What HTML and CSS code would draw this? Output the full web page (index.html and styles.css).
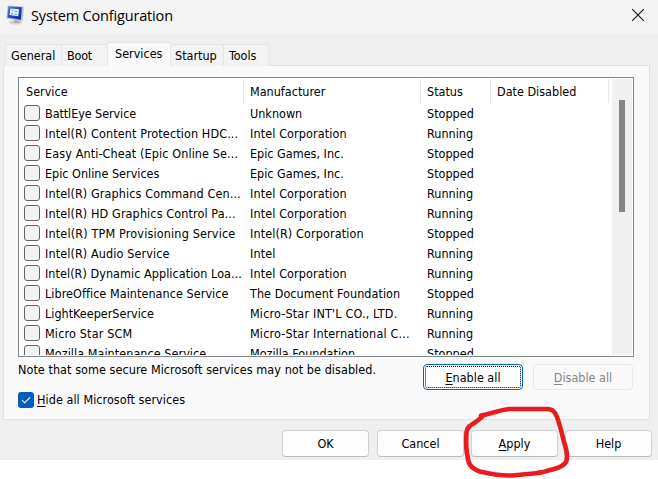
FILE: index.html
```
<!DOCTYPE html>
<html lang="en">
<head>
<meta charset="utf-8">
<title>System Configuration</title>
<link rel="stylesheet" href="styles.css">
</head>
<body>
<div class="window">
  <header class="titlebar">
    <svg class="app-icon" width="20" height="20" viewBox="0 0 20 20">
      <defs>
        <linearGradient id="screen" x1="0" y1="0" x2="1" y2="1"><stop offset="0" stop-color="#5585dc"/><stop offset=".5" stop-color="#2448bd"/><stop offset="1" stop-color="#1020a0"/></linearGradient>
      </defs>
      <ellipse cx="9.500" cy="17.500" rx="6.500" ry="2.200" fill="#d2d4d5"/>
      <path d="M8.500 13l5.500 1-1 4H7.500z" fill="#a9adb0"/>
      <path d="M1.500 .5L18 1.500 16.500 16.500 .5 13.500z" fill="#bfc5cc"/>
      <path d="M2.300 1.200L16 2.200 14.800 14.800 1.500 12.500z" fill="url(#screen)"/>
      <path d="M4.300 3.500L13 4.200 12.200 11.200 3.500 10z" fill="#e9f3fb"/>
      <path d="M5.500 5l1 .8 1-1.300M5 8.300l1 .8 1-1.300M8.500 6.200l3 .3M8.300 9l2.700.4" fill="none" stroke="#4a8ac6" stroke-width=".9"/>
    </svg>
    <h1 class="title">System Configuration</h1>
    <svg class="close" width="14" height="14" viewBox="0 0 14 14"><path d="M1.200 1.200L12.800 12.800M12.800 1.200L1.200 12.800" stroke="#1b1b1b" stroke-width="1.200"/></svg>
  </header>
  <nav class="tabs">
    <span class="tab general">General</span><span class="tab boot">Boot</span><span class="tab active">Services</span><span class="tab startup">Startup</span><span class="tab tools">Tools</span>
  </nav>
  <main class="panel">
    <section class="list">
      <div class="table">
        <div class="row head"><span>Service</span><span>Manufacturer</span><span>Status</span><span>Date Disabled</span></div>
        <div class="row"><i class="box"></i><span class="tight">BattlEye Service</span><span>Unknown</span><span>Stopped</span></div>
        <div class="row"><i class="box"></i><span class="wide">Intel(R) Content Protection HDC...</span><span class="wide">Intel Corporation</span><span>Running</span></div>
        <div class="row"><i class="box"></i><span class="wide">Easy Anti-Cheat (Epic Online Se...</span><span>Epic Games, Inc.</span><span>Stopped</span></div>
        <div class="row"><i class="box"></i><span>Epic Online Services</span><span>Epic Games, Inc.</span><span>Stopped</span></div>
        <div class="row"><i class="box"></i><span class="wide">Intel(R) Graphics Command Cen...</span><span class="wide">Intel Corporation</span><span>Running</span></div>
        <div class="row"><i class="box"></i><span class="wide">Intel(R) HD Graphics Control Pa...</span><span class="wide">Intel Corporation</span><span>Running</span></div>
        <div class="row"><i class="box"></i><span class="wider">Intel(R) TPM Provisioning Service</span><span class="wide">Intel(R) Corporation</span><span>Stopped</span></div>
        <div class="row"><i class="box"></i><span class="wide">Intel(R) Audio Service</span><span class="wide">Intel</span><span>Running</span></div>
        <div class="row"><i class="box"></i><span class="slight">Intel(R) Dynamic Application Loa...</span><span class="wide">Intel Corporation</span><span>Running</span></div>
        <div class="row"><i class="box"></i><span class="slight">LibreOffice Maintenance Service</span><span class="slight">The Document Foundation</span><span>Stopped</span></div>
        <div class="row"><i class="box"></i><span>LightKeeperService</span><span class="wider">Micro-Star INT'L CO., LTD.</span><span>Running</span></div>
        <div class="row"><i class="box"></i><span class="wider">Micro Star SCM</span><span class="wider">Micro-Star International C...</span><span>Running</span></div>
        <div class="row"><i class="box"></i><span class="slight">Mozilla Maintenance Service</span><span>Mozilla Foundation</span><span>Stopped</span></div>
      </div>
      <div class="scrollbar"><div class="thumb"></div></div>
    </section>
    <div class="below">
      <div class="notes">
        <p class="note">Note that some secure Microsoft services may not be disabled.</p>
        <label class="hide"><svg class="check" width="16" height="16" viewBox="0 0 16 16"><rect width="16" height="16" rx="3" fill="#005fb8"/><path d="M4 8.200l2.700 2.600L12 5.400" fill="none" stroke="#fff" stroke-width="1.100"/></svg><span><u>H</u>ide all Microsoft services</span></label>
      </div>
      <button class="btn focused"><span><u>E</u>nable all</span></button>
      <button class="btn disabled"><span><u>D</u>isable all</span></button>
    </div>
  </main>
  <footer class="actions">
    <button class="btn">OK</button>
    <button class="btn">Cancel</button>
    <button class="btn apply"><span><u>A</u>pply</span></button>
    <button class="btn help">Help</button>
  </footer>
</div>
<svg class="marker" width="120" height="79" viewBox="460 400 120 79"><path d="M481 415.500C490 414 500 410 509 409L547 409C553 409 555 412 557 417C560 425 562 434 564 442C567 450 567.500 456 566.500 461C564 467 555 469 543 472C534 474 525 474 512 475.500C500 476 490 474 480 471.500C470 468 468 463 467.500 456C465.500 448 466 440 466.500 432C467 427 471 425 475 422.500L482 417" fill="none" stroke="#e81c1e" stroke-width="4.600" stroke-linecap="round" stroke-linejoin="round"/></svg>
</body>
</html>
```
FILE: styles.css
```
* { box-sizing: border-box; }
body {
  margin: 0;
  position: relative;
  height: 479px;
  overflow: hidden;
  background: #fff;
  color: #000;
  font: 12.5px/20px "DejaVu Sans Condensed", "DejaVu Sans", sans-serif;
  font-stretch: condensed;
}
.window { height: 460px; background: #efefef; }
.titlebar {
  display: flex;
  align-items: flex-start;
  height: 34px;
  padding: 5px 13px 0 6px;
  background: #f3f3f3;
}
.title {
  margin: 0 auto 0 5px;
  font: 14.5px/22px "Open Sans", sans-serif;
  letter-spacing: -0.16px;
}
.close { margin-top: 3px; }
.tabs { display: flex; align-items: flex-end; height: 32px; padding-left: 5px; }
.tab {
  height: 22px;
  padding-left: 6px;
  border: 1px solid #e5e5e5;
  border-width: 1px 0 0 1px;
  background: #f3f3f3;
  line-height: 21px;
}
.general { width: 56px; padding-left: 5px; }
.boot { width: 46px; padding-left: 5px; letter-spacing: -0.2px; }
.active { position: relative; z-index: 1; width: 64px; height: 24px; padding-left: 7px; border-right-width: 1px; background: #f9f9f9; }
.startup { width: 52px; padding-left: 4px; border-left: 0; }
.tools { width: 46px; padding-left: 5px; border-right-width: 1px; }
.panel {
  width: 647px;
  height: 355px;
  margin: -1px 0 0 3px;
  padding: 11px 14px;
  border: 1px solid #e2e2e2;
  background: #f9f9f9;
}
.list {
  display: flex;
  justify-content: space-between;
  width: 616px;
  height: 280px;
  overflow: hidden;
  border: 1px solid #82868f;
  background: #fff;
  padding: 1px 1px 1px 0;
}
.table { width: 590px; height: 276px; overflow: hidden; }
.row {
  display: grid;
  grid-template-columns: 26px 205px 177px 1fr;
  align-items: center;
  height: 20px;
  white-space: nowrap;
}
.row span { padding-top: 2px; line-height: 18px; }
.row.head { grid-template-columns: 225px 177px 70px 118px; height: 24px; }
.head span { height: 24px; padding: 1px 0 0 6px; border-right: 1px solid #e5e5e5; line-height: 24px; }
.head span:first-child { padding-left: 7px; }
.tight { letter-spacing: -0.08px; }
.slight { letter-spacing: 0.05px; }
.wide { letter-spacing: 0.11px; }
.wider { letter-spacing: 0.16px; }
.box {
  width: 16px;
  height: 16px;
  margin-left: 5px;
  border: 1px solid #626262;
  border-radius: 3px;
  background: #f3f3f3;
}
.scrollbar { width: 20px; height: 276px; padding: 21px 7px 0; background: #f0f0f0; }
.thumb { height: 112px; background: #858585; }
.below { display: flex; align-items: flex-start; width: 615px; }
.notes { flex: 1; }
.note { margin: 3px 0 10px; letter-spacing: 0.055px; }
.hide { display: flex; align-items: center; gap: 3px; height: 20px; letter-spacing: 0.05px; }
u { text-underline-offset: 2px; text-decoration-thickness: 1px; }
.btn {
  display: flex;
  align-items: center;
  justify-content: center;
  width: 87px;
  height: 27px;
  padding: 0;
  border: 1px solid #d0d0d0;
  border-bottom-color: #bcbcbc;
  border-radius: 4px;
  background: #fdfdfd;
  color: #000;
  font: inherit;
}
.focused { width: 100px; height: 26px; margin: 7px 10px 0 0; padding-top: 1px; border-color: #0067c0; outline: 1px dotted #000; outline-offset: -3px; }
.disabled { width: 100px; height: 26px; margin-top: 7px; padding-top: 1px; border-color: #e8e8e8; background: #f9f9f9; color: #858585; }
.actions { display: flex; gap: 8px; justify-content: flex-end; padding: 10px 6px 0 0; }
.apply { margin-left: -1px; }
.help { margin-left: -1px; }
.marker { position: absolute; left: 460px; top: 400px; }
```
